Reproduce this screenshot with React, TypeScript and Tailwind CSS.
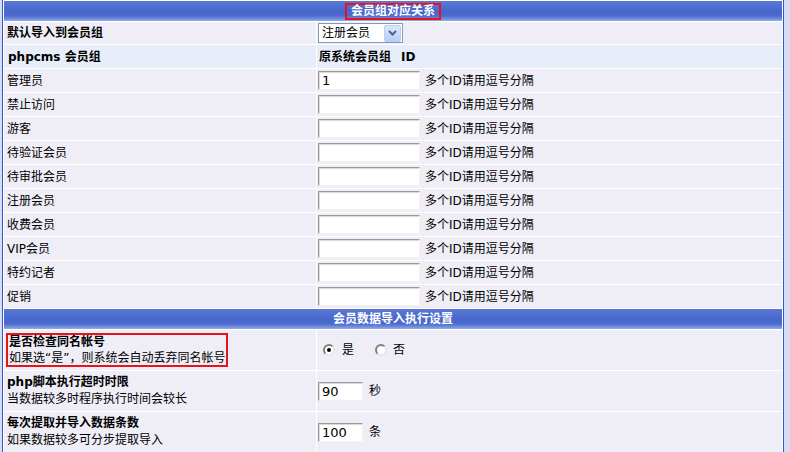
import React from "react";

const groups = [
  "管理员",
  "禁止访问",
  "游客",
  "待验证会员",
  "待审批会员",
  "注册会员",
  "收费会员",
  "VIP会员",
  "特约记者",
  "促销",
];

function Header({ children, boxed }: { children: React.ReactNode; boxed?: boolean }) {
  return (
    <div className="col-span-2 h-[20px] flex items-center justify-center bg-[linear-gradient(to_bottom,#5a78d3_0%,#4767cd_50%,#4a6acf_72%,#6683d8_85%,#94abe6_100%)] text-white font-bold">
      {boxed ? (
        <span className="border-2 border-[#e8141b] px-[4px] leading-[13px]">{children}</span>
      ) : (
        <span className="leading-[14px]">{children}</span>
      )}
    </div>
  );
}

function TextBox({ value, w }: { value?: string; w: string }) {
  return (
    <div
      className={`${w} h-[19px] bg-white border border-t-[#9a9a9a] border-l-[#9a9a9a] border-r-[#f2f2f2] border-b-[#f2f2f2] shadow-[inset_1px_1px_0_#dcdad2] flex items-center pl-[3px] text-[13px] leading-none`}
    >
      {value}
    </div>
  );
}

function Radio({ checked }: { checked?: boolean }) {
  return (
    <span className="w-[12px] h-[12px] rounded-full border-2 border-t-[#808080] border-l-[#808080] border-r-[#e6e6e6] border-b-[#e6e6e6] bg-white flex items-center justify-center">
      {checked ? <span className="w-[4px] h-[4px] rounded-full bg-black" /> : null}
    </span>
  );
}

export default function App() {
  const cellL = "bg-[#efeef7] pl-[3px] flex items-center";
  const cellR = "bg-[#efeef7] pl-px flex items-center";
  return (
    <div className="w-[790px] h-[452px] overflow-hidden bg-[#d4dcf6] pl-[2px] font-[family-name:'DejaVu_Sans','Noto_Sans_CJK_SC',sans-serif] text-[12px] text-black">
      <div className="w-[782px] border-x border-[#3557c3] bg-white p-px grid grid-cols-[312px_1fr] gap-px">
        <Header boxed>会员组对应关系</Header>

        <div className={`${cellL} h-[22px] font-bold`}>默认导入到会员组</div>
        <div className={`${cellR} h-[22px]`}>
          <div className="w-[85px] h-[20px] border border-[#7f9db9] bg-white flex items-center">
            <span className="pl-[3px] leading-none">注册会员</span>
            <span className="ml-auto mr-px w-[17px] h-[17px] rounded-[2px] border border-[#bccbf0] bg-[linear-gradient(to_bottom,#dce6fd,#b9cdf7)] flex items-center justify-center">
              <svg width="9" height="6" viewBox="0 0 9 6">
                <path d="M1 1 L4.5 4.5 L8 1" fill="none" stroke="#4d6185" strokeWidth="2" />
              </svg>
            </span>
          </div>
        </div>

        <div className="bg-[#e7eef9] h-[23px] pl-[4px] flex items-center font-bold">phpcms 会员组</div>
        <div className="bg-[#e7eef9] h-[23px] pl-[2px] flex items-center font-bold">
          <span>原系统会员组</span>
          <span className="ml-[10px]">ID</span>
        </div>

        {groups.map((g, i) => (
          <React.Fragment key={g}>
            <div className={`${cellL} h-[23px]`}>{g}</div>
            <div className={`${cellR} h-[23px] gap-[5px]`}>
              <TextBox w="w-[102px]" value={i === 0 ? "1" : ""} />
              <span>多个ID请用逗号分隔</span>
            </div>
          </React.Fragment>
        ))}

        <Header>会员数据导入执行设置</Header>

        <div className={`${cellL} h-[40px]`}>
          <div className="-ml-px border-2 border-[#e8141b] w-[222px] h-[34px] flex flex-col justify-center pl-px">
            <span className="font-bold leading-[16px]">是否检查同名帐号</span>
            <span className="leading-[16px]">如果选“是”，则系统会自动丢弃同名帐号</span>
          </div>
        </div>
        <div className="bg-[#efeef7] h-[40px] pl-[6px] flex items-center">
          <Radio checked />
          <span className="ml-[7px]">是</span>
          <span className="ml-[21px]">
            <Radio />
          </span>
          <span className="ml-[6px]">否</span>
        </div>

        <div className={`${cellL} h-[40px] flex-col items-start justify-center`}>
          <span className="font-bold leading-[17px]">php脚本执行超时时限</span>
          <span className="leading-[17px]">当数据较多时程序执行时间会较长</span>
        </div>
        <div className={`${cellR} h-[40px] gap-[6px]`}>
          <TextBox w="w-[45px]" value="90" />
          <span>秒</span>
        </div>

        <div className={`${cellL} h-[40px] flex-col items-start justify-center`}>
          <span className="font-bold leading-[17px]">每次提取并导入数据条数</span>
          <span className="leading-[17px]">如果数据较多可分步提取导入</span>
        </div>
        <div className={`${cellR} h-[40px] gap-[6px]`}>
          <TextBox w="w-[45px]" value="100" />
          <span>条</span>
        </div>
      </div>
    </div>
  );
}
